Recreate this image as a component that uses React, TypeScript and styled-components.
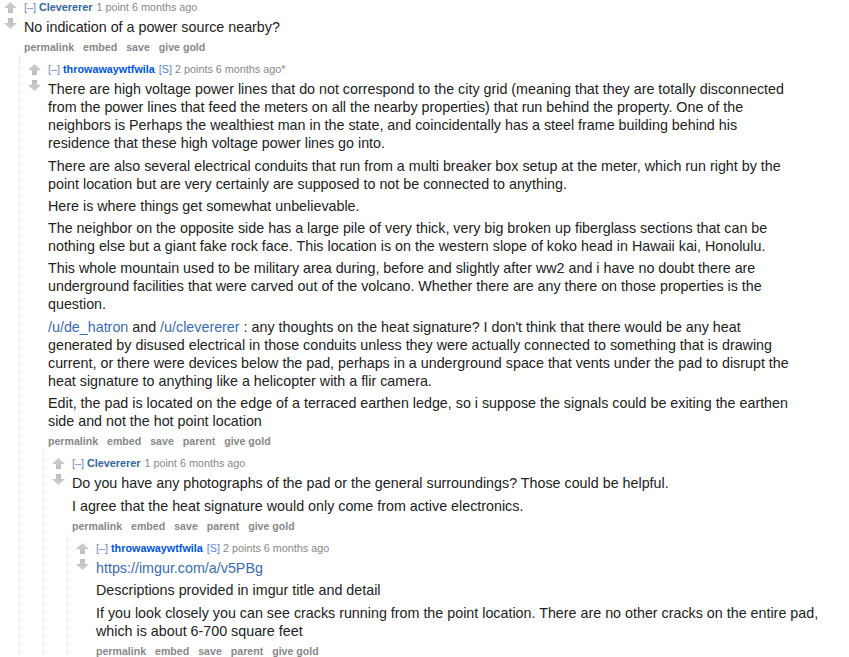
import { FC, ReactNode } from "react"
import styled, { createGlobalStyle } from "styled-components"

const GlobalStyle = createGlobalStyle`
  html, body {
    margin: 0;
    padding: 0;
    background: #fff;
  }
  body {
    font-family: "Liberation Sans", Arial, sans-serif;
    color: #222;
  }
`

const Page = styled.div`
  width: 849px;
  height: 657px;
  overflow: hidden;
  padding-right: 4px;
  box-sizing: border-box;
`

const Thing = styled.div<{ $root?: boolean }>`
  margin-left: ${({ $root }) => ($root ? "-4px" : "0")};
  padding-top: ${({ $root }) => ($root ? "0" : "6px")};
`

const Row = styled.div`
  display: flex;
  align-items: flex-start;
`

const Midcol = styled.div`
  flex: 0 0 28px;
  display: flex;
  flex-direction: column;
  gap: 5px;
  padding: 2px 0 0 8px;
  box-sizing: border-box;
`

const Entry = styled.div`
  flex: 1;
  min-width: 0;
`

const Tagline = styled.p`
  margin: 0;
  font-size: 10.8px;
  line-height: 14px;
  color: #888;
  white-space: nowrap;

  .expand {
    color: #6a8cb8;
    margin-right: 3px;
  }

  .author {
    color: #369;
    font-weight: bold;
    margin-right: 4px;
  }

  .author.submitter {
    color: #0055df;
  }

  .flag {
    color: #5f7fd6;
    margin-right: 3px;
  }
`

const Body = styled.div`
  margin-top: 4px;
  font-size: 14.3px;
  line-height: 18px;

  p {
    margin: 0 0 4.3px;
    white-space: nowrap;
  }

  a {
    color: #3a6cb4;
    text-decoration: none;
  }
`

const Buttons = styled.ul`
  display: flex;
  margin: 0;
  padding: 0;
  list-style: none;
  font-size: 10.6px;
  line-height: 14px;
  font-weight: bold;
  color: #888;

  li {
    margin-right: 9px;
  }
`

const Child = styled.div`
  margin: 2px 0 0 23px;
  border-left: 1px dotted #ddf;
`

const Arrow: FC<{ down?: boolean }> = ({ down }) => (
  <svg
    width="13"
    height="11"
    viewBox="0 0 13 11"
    style={down ? { transform: "rotate(180deg)" } : undefined}
  >
    <defs>
      <linearGradient id={down ? "ad" : "au"} x1="0" y1="0" x2="0" y2="1">
        <stop offset="0" stopColor="#cfcfcf" />
        <stop offset="1" stopColor="#bdbdbd" />
      </linearGradient>
    </defs>
    <path
      d="M6.5 0 L13 6 L9 6 L9 11 L4 11 L4 6 L0 6 Z"
      fill={`url(#${down ? "ad" : "au"})`}
    />
  </svg>
)

type CommentProps = {
  author: string
  submitter?: boolean
  score: string
  time: string
  edited?: boolean
  buttons: string[]
  root?: boolean
  children?: ReactNode
  replies?: ReactNode
}

const Comment: FC<CommentProps> = ({
  author,
  submitter,
  score,
  time,
  edited,
  buttons,
  root,
  children,
  replies,
}) => (
  <Thing $root={root}>
    <Row>
      <Midcol>
        <Arrow />
        <Arrow down />
      </Midcol>
      <Entry>
        <Tagline>
          <span className="expand">[–]</span>
          <span className={submitter ? "author submitter" : "author"}>{author}</span>
          {submitter && <span className="flag">[S]</span>}
          {score} {time}
          {edited && "*"}
        </Tagline>
        <Body>{children}</Body>
        <Buttons>
          {buttons.map((b) => (
            <li key={b}>{b}</li>
          ))}
        </Buttons>
      </Entry>
    </Row>
    {replies && <Child>{replies}</Child>}
  </Thing>
)

const full = ["permalink", "embed", "save", "parent", "give gold"]

export default function App() {
  return (
    <Page>
      <GlobalStyle />
      <Comment
        root
        author="Clevererer"
        score="1 point"
        time="6 months ago"
        buttons={["permalink", "embed", "save", "give gold"]}
        replies={
          <Comment
            author="throwawaywtfwila"
            submitter
            score="2 points"
            time="6 months ago"
            edited
            buttons={full}
            replies={
              <Comment
                author="Clevererer"
                score="1 point"
                time="6 months ago"
                buttons={full}
                replies={
                  <Comment
                    author="throwawaywtfwila"
                    submitter
                    score="2 points"
                    time="6 months ago"
                    buttons={full}
                  >
                    <p>
                      <a href="#">https://imgur.com/a/v5PBg</a>
                    </p>
                    <p>Descriptions provided in imgur title and detail</p>
                    <p>
                      If you look closely you can see cracks running from the point location. There are no other cracks on the entire pad,
                      <br />
                      which is about 6-700 square feet
                    </p>
                  </Comment>
                }
              >
                <p>Do you have any photographs of the pad or the general surroundings? Those could be helpful.</p>
                <p>I agree that the heat signature would only come from active electronics.</p>
              </Comment>
            }
          >
            <p>
              There are high voltage power lines that do not correspond to the city grid (meaning that they are totally disconnected
              <br />
              from the power lines that feed the meters on all the nearby properties) that run behind the property. One of the
              <br />
              neighbors is Perhaps the wealthiest man in the state, and coincidentally has a steel frame building behind his
              <br />
              residence that these high voltage power lines go into.
            </p>
            <p>
              There are also several electrical conduits that run from a multi breaker box setup at the meter, which run right by the
              <br />
              point location but are very certainly are supposed to not be connected to anything.
            </p>
            <p>Here is where things get somewhat unbelievable.</p>
            <p>
              The neighbor on the opposite side has a large pile of very thick, very big broken up fiberglass sections that can be
              <br />
              nothing else but a giant fake rock face. This location is on the western slope of koko head in Hawaii kai, Honolulu.
            </p>
            <p>
              This whole mountain used to be military area during, before and slightly after ww2 and i have no doubt there are
              <br />
              underground facilities that were carved out of the volcano. Whether there are any there on those properties is the
              <br />
              question.
            </p>
            <p>
              <a href="#">/u/de_hatron</a> and <a href="#">/u/clevererer</a> : any thoughts on the heat signature? I don't think that there would be any heat
              <br />
              generated by disused electrical in those conduits unless they were actually connected to something that is drawing
              <br />
              current, or there were devices below the pad, perhaps in a underground space that vents under the pad to disrupt the
              <br />
              heat signature to anything like a helicopter with a flir camera.
            </p>
            <p>
              Edit, the pad is located on the edge of a terraced earthen ledge, so i suppose the signals could be exiting the earthen
              <br />
              side and not the hot point location
            </p>
          </Comment>
        }
      >
        <p>No indication of a power source nearby?</p>
      </Comment>
    </Page>
  )
}
